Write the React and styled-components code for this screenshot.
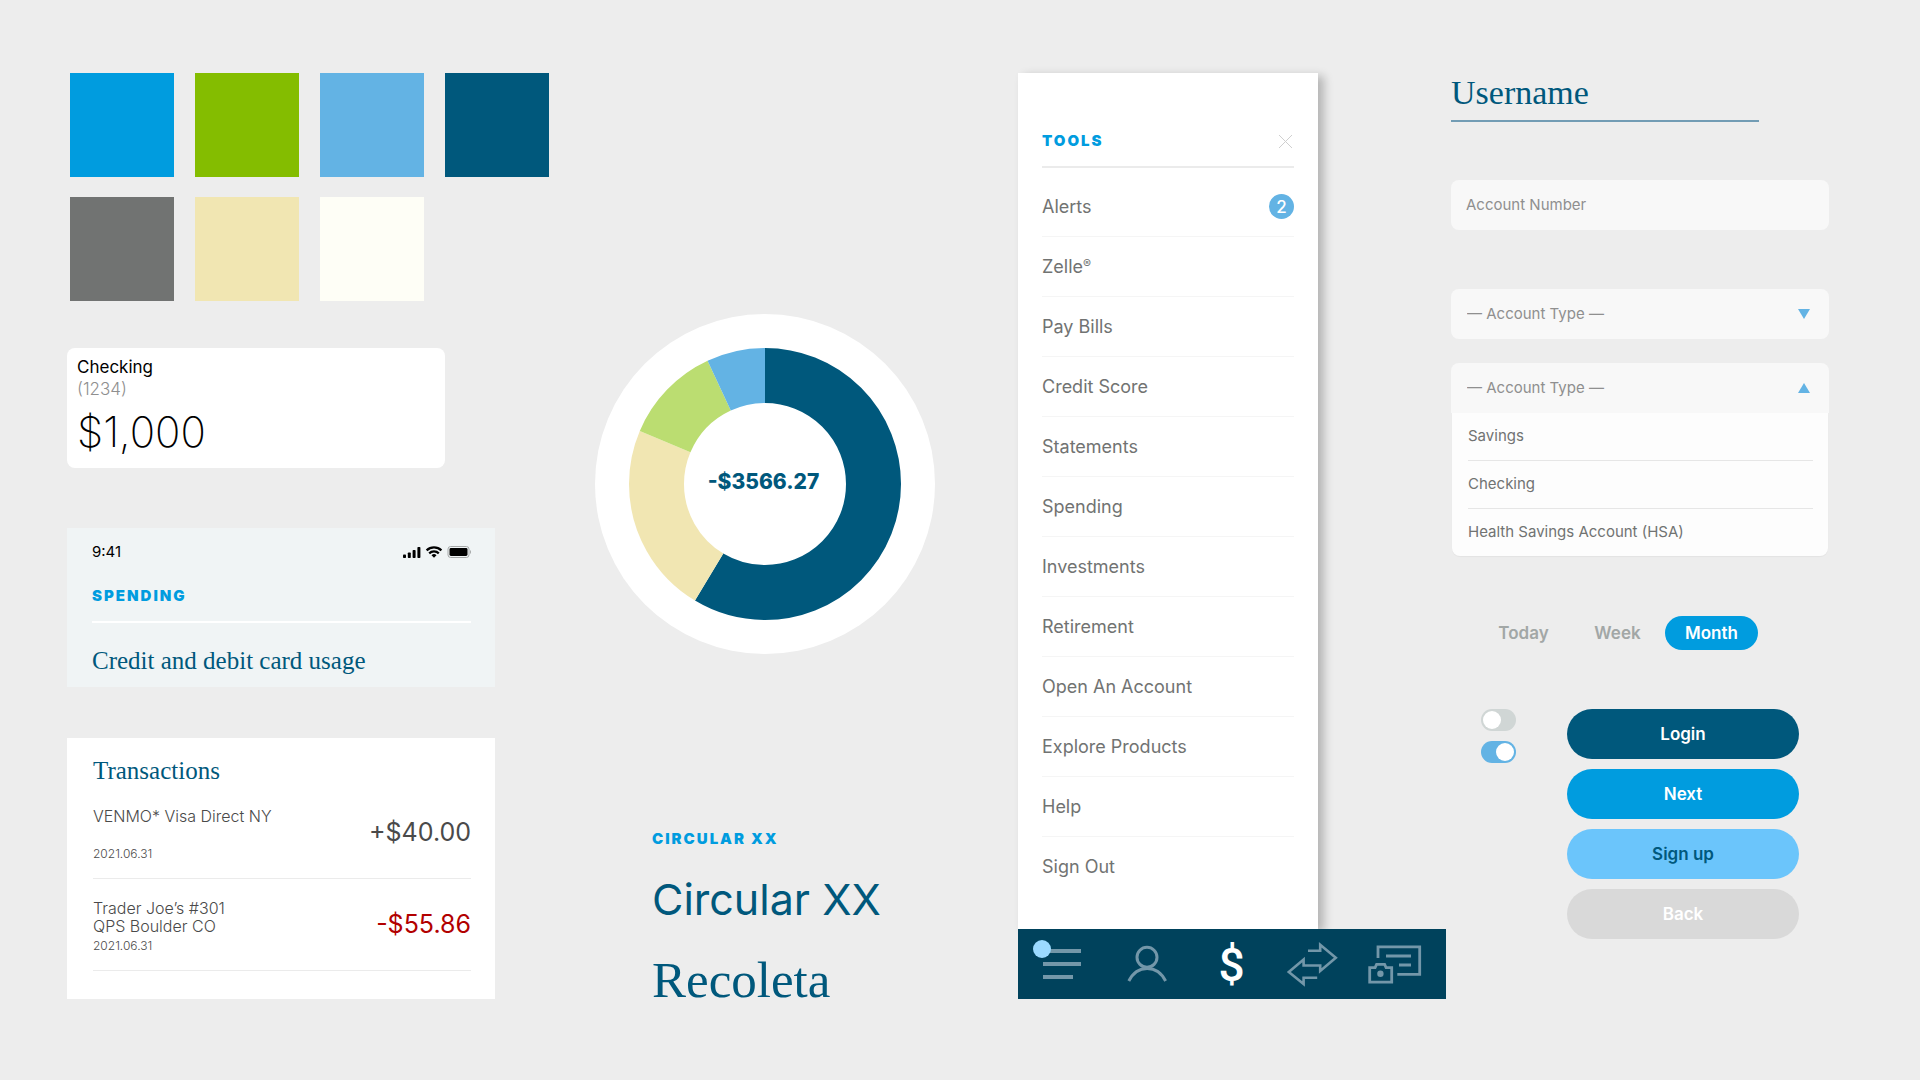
import React, { useState } from 'react';
import styled, { createGlobalStyle } from 'styled-components';

const BLUE = '#009cdf';
const GREEN = '#84bd00';
const SKY = '#63b3e4';
const NAVY = '#00587c';
const GRAY = '#717372';
const SAND = '#f1e6b2';
const IVORY = '#fefef6';
const LIME = '#bbdd71';
const NAV_BG = '#00425c';
const NAV_ICON = '#7397a9';
const PAGE_BG = '#ededed';

const SANS = "'Inter', 'Liberation Sans', sans-serif";
const SERIF = "'Liberation Serif', serif";

const SWATCHES = [BLUE, GREEN, SKY, NAVY, GRAY, SAND, IVORY];

const SLICES = [
  { name: 'dark', color: NAVY, from: 0, to: 211 },
  { name: 'sand', color: SAND, from: 211, to: 293 },
  { name: 'lime', color: LIME, from: 293, to: 335 },
  { name: 'sky', color: SKY, from: 335, to: 360 },
];

const MENU = [
  'Alerts',
  'Zelle',
  'Pay Bills',
  'Credit Score',
  'Statements',
  'Spending',
  'Investments',
  'Retirement',
  'Open An Account',
  'Explore Products',
  'Help',
  'Sign Out',
];

const ACCOUNT_TYPES = ['Savings', 'Checking', 'Health Savings Account (HSA)'];

const GlobalStyle = createGlobalStyle`
  *, *::before, *::after {
    box-sizing: border-box;
  }

  body {
    margin: 0;
    background: ${PAGE_BG};
    font-family: ${SANS};
  }

  h1, h2, h3, p, ul {
    margin: 0;
    padding: 0;
    font-weight: 400;
  }

  ul {
    list-style: none;
  }

  button, input, select {
    font-family: inherit;
    margin: 0;
    border: 0;
  }
`;

const Page = styled.main`
  display: grid;
  grid-template-columns: 528fr 423fr 433fr 378fr;
  padding: 73px 91px 81px 67px;
`;

const Column = styled.section`
  display: flex;
  flex-direction: column;
  min-width: 0;
  padding-right: ${props => props.$space || 0}px;
`;

const Swatches = styled.div`
  display: grid;
  grid-template-columns: repeat(4, 104px);
  gap: 20px 21px;
  margin: 0 0 47px 3px;
`;

const Swatch = styled.div`
  height: 104px;
  background: ${props => props.$color};
`;

const AccountCard = styled.div`
  width: 378px;
  max-width: 100%;
  padding: 8px 10px 11px;
  margin-bottom: 60px;
  border-radius: 8px;
  background: #fff;
  font-size: 17px;
  line-height: 22px;
  color: #000;
`;

const AccountDigits = styled.p`
  color: #8f8f8f;
  font-weight: 300;
`;

const Balance = styled.p`
  margin-top: 7px;
  font-size: 42px;
  line-height: 50px;
  font-weight: 200;
`;

const SpendingCard = styled.div`
  padding: 14px 24px 12px 25px;
  margin-bottom: 51px;
  background: #f0f4f5;
`;

const StatusBar = styled.div`
  display: flex;
  justify-content: space-between;
  align-items: center;
  margin-bottom: 24px;
  font-size: 15px;
  line-height: 20px;
  color: #000;
`;

const Eyebrow = styled.h2`
  color: ${BLUE};
  font-size: 15px;
  line-height: 20px;
  font-weight: 900;
  letter-spacing: 2px;
  text-transform: uppercase;
`;

const Rule = styled.hr`
  height: 2px;
  margin: 15px 0 24px;
  border: 0;
  background: #fff;
`;

const SerifTitle = styled.h3`
  color: ${NAVY};
  font-family: ${SERIF};
  font-size: 25px;
  line-height: 28px;
`;

const TransactionsCard = styled.div`
  padding: 19px 24px 28px 26px;
  background: #fff;
`;

const Transaction = styled.li`
  display: flex;
  justify-content: space-between;
  align-items: center;
  min-height: 92px;
  margin-top: ${props => (props.$first ? 2 : 0)}px;
  border-bottom: 1px solid #ebebeb;
  color: #4a4a4a;
`;

const Details = styled.div`
  padding: 20px 0 16px;
`;

const Merchant = styled.p`
  min-height: 36px;
  font-size: 16px;
  line-height: 18px;
  font-weight: 300;
  white-space: pre-line;
`;

const DateText = styled.p`
  margin-top: 3px;
  font-size: 12px;
  line-height: 16px;
  font-weight: 300;
`;

const Amount = styled.p`
  padding-bottom: 2px;
  color: ${props => (props.$negative ? '#b20000' : '#4a4a4a')};
  font-size: 25px;
  line-height: 32px;
`;

const Donut = styled.div`
  display: grid;
  place-items: center;
  width: 340px;
  height: 340px;
  margin-top: 241px;
  border-radius: 50%;
  background: #fff;

  & > * {
    grid-area: 1 / 1;
  }
`;

const DonutTotal = styled.p`
  padding: 0 3px 5px 0;
  color: ${NAVY};
  font-size: 21px;
  line-height: 28px;
  font-weight: 800;
`;

const TypeSamples = styled.div`
  margin-top: 175px;
  padding-left: 57px;
  color: ${NAVY};
  white-space: nowrap;
`;

const SansSample = styled.p`
  margin: 22px 0 23px;
  font-size: 43px;
  line-height: 56px;
`;

const SerifSample = styled.p`
  font-family: ${SERIF};
  font-size: 51px;
  line-height: 60px;
`;

const Drawer = styled.div`
  width: 300px;
  min-height: 856px;
  padding: 58px 24px 32px;
  background: #fff;
  box-shadow: 6px 3px 9px rgba(0, 0, 0, 0.24);
`;

const DrawerHeader = styled.header`
  display: flex;
  justify-content: space-between;
  align-items: center;
  padding-bottom: 15px;
  margin-bottom: 9px;
  border-bottom: 2px solid #ebebeb;
`;

const CloseButton = styled.button`
  display: flex;
  padding: 0;
  background: none;
  cursor: pointer;
`;

const MenuItem = styled.li`
  border-bottom: 1px solid #f5f5f5;

  &:last-child {
    border-color: transparent;
  }
`;

const MenuLink = styled.a`
  display: flex;
  justify-content: space-between;
  align-items: center;
  height: 59px;
  color: ${GRAY};
  font-size: 18px;
  font-weight: 400;
  text-decoration: none;
`;

const Mark = styled.sup`
  font-size: 12px;
  line-height: 1;
  vertical-align: 5px;
`;

const Badge = styled.span`
  display: grid;
  place-items: center;
  width: 25px;
  height: 25px;
  border-radius: 50%;
  background: ${SKY};
  color: #fff;
  font-size: 17px;
  font-weight: 500;
`;

/* positioned so that it covers the drawer's shadow */
const TabBar = styled.nav`
  position: relative;
  display: grid;
  grid-template-columns: 84fr 90fr 79fr 82fr 93fr;
  height: 70px;
  background: ${NAV_BG};
`;

const TabButton = styled.button`
  display: flex;
  justify-content: center;
  align-items: center;
  padding: 0;
  background: none;
  color: #fff;
  cursor: pointer;

  & > svg {
    fill: none;
    stroke: ${NAV_ICON};
    stroke-width: 3;
  }
`;

const Dollar = styled.span`
  padding-top: 2px;
  font-family: Roboto, sans-serif;
  font-size: 46px;
  font-weight: 500;
  line-height: 48px;
`;

const UsernameInput = styled.input`
  width: 308px;
  max-width: 100%;
  height: 49px;
  padding: 0 0 8px;
  margin-bottom: 58px;
  border-bottom: 2px solid #729cb4;
  border-radius: 0;
  background: none;
  color: ${NAVY};
  font-family: ${SERIF};
  font-size: 34px;
  outline: none;

  &::placeholder {
    color: ${NAVY};
    opacity: 1;
  }
`;

const AccountInput = styled.input`
  width: 100%;
  height: 50px;
  padding: 0 15px 2px;
  margin-bottom: 59px;
  border-radius: 8px;
  background: #f8f8f8;
  color: ${GRAY};
  font-size: 15px;
  outline: none;

  &::placeholder {
    color: #8f8f8f;
    opacity: 1;
  }
`;

const SelectBox = styled.div`
  display: grid;
  align-items: center;
  margin-bottom: ${props => (props.$open ? 0 : 24)}px;

  & > * {
    grid-area: 1 / 1;
  }

  & > svg {
    justify-self: end;
    margin-right: 19px;
    fill: ${SKY};
    pointer-events: none;
  }
`;

const Select = styled.select`
  appearance: none;
  width: 100%;
  height: 50px;
  padding: 0 40px 2px 16px;
  border-radius: ${props => (props.$open ? '8px 8px 0 0' : '8px')};
  background: #f8f8f8;
  color: #8f8f8f;
  font-size: 15px;
  outline: none;
`;

const OptionList = styled.ul`
  margin: 0 1px 60px;
  padding: 0 15px 0 16px;
  border-radius: 0 0 8px 8px;
  background: #fdfdfd;
  box-shadow: 0 1px 1px rgba(0, 0, 0, 0.04);
`;

const Option = styled.li`
  height: 48px;
  border-bottom: 1px solid #e6e6e6;
  color: ${GRAY};
  font-size: 15px;
  line-height: 46px;

  &:last-child {
    height: 47px;
    border-bottom: 0;
  }
`;

const Ranges = styled.div`
  display: grid;
  grid-template-columns: repeat(3, 93px);
  gap: 1px;
  margin: 0 0 59px 26px;
`;

const RangeButton = styled.button`
  height: 34px;
  padding: 0;
  border-radius: 17px;
  background: ${props => (props.$active ? BLUE : 'none')};
  color: ${props => (props.$active ? '#fff' : '#a2a7a6')};
  font-size: 17px;
  font-weight: 600;
  cursor: pointer;
`;

const Actions = styled.div`
  display: flex;
  align-items: flex-start;
  gap: 51px;
  padding: 0 30px;
`;

const Toggles = styled.div`
  display: grid;
  gap: 10px;
`;

const Toggle = styled.input`
  appearance: none;
  display: flex;
  width: 35px;
  height: 22px;
  padding: 2px;
  border-radius: 11px;
  background: #d0d6d5;
  cursor: pointer;

  &::before {
    content: '';
    width: 18px;
    height: 18px;
    border-radius: 50%;
    background: #fff;
  }

  &:checked {
    justify-content: flex-end;
    background: ${SKY};
  }
`;

const Buttons = styled.div`
  display: grid;
  flex: 1 1 auto;
  gap: 10px;
`;

const Button = styled.button`
  height: 50px;
  border-radius: 25px;
  background: ${props => props.$bg};
  color: ${props => props.$color || '#fff'};
  font-size: 17px;
  font-weight: 600;
  cursor: pointer;
`;

const StatusIcons = () => (
  <svg width="68" height="12" viewBox="0 0 68 12" aria-hidden="true">
    <rect x="0" y="8.5" width="3" height="3.5" rx="0.8" />
    <rect x="4.8" y="6.5" width="3" height="5.5" rx="0.8" />
    <rect x="9.6" y="4" width="3" height="8" rx="0.8" />
    <rect x="14.4" y="1" width="3" height="11" rx="0.8" />
    <g fill="none" stroke="#000" strokeWidth="2.2">
      <path d="M23.6 4.4a10.6 10.6 0 0 1 14.8 0" />
      <path d="M26.2 7.4a6.8 6.8 0 0 1 9.6 0" />
    </g>
    <path d="M31 11.8l-2.5-2.5a3.6 3.6 0 0 1 5 0z" />
    <rect
      x="45"
      y="0.5"
      width="21"
      height="11"
      rx="2.6"
      fill="none"
      stroke="#a5a8a8"
    />
    <rect x="46.5" y="2" width="18" height="8" rx="1.4" />
    <path d="M67 4v4q1-.6 1-2t-1-2z" fill="#a5a8a8" />
  </svg>
);

const DonutChart = () => (
  <svg width="272" height="272" viewBox="-136 -136 272 272" aria-hidden="true">
    <g fill="none" strokeWidth="55" transform="rotate(-90)">
      {SLICES.map(({ name, color, from, to }) => (
        <circle
          key={name}
          r="108.5"
          stroke={color}
          pathLength="360"
          strokeDasharray={`${to - from} ${360 - to + from}`}
          strokeDashoffset={-from}
        />
      ))}
    </g>
  </svg>
);

const Arrow = ({ up }) => (
  <svg width="12" height="10" viewBox="0 0 12 10" aria-hidden="true">
    <path d={up ? 'M6 0l6 10H0z' : 'M0 0h12L6 10z'} />
  </svg>
);

const AccountSelect = ({ label, open }) => (
  <SelectBox $open={open}>
    <Select aria-label={label} $open={open} defaultValue="">
      <option value="">— Account Type —</option>
      {ACCOUNT_TYPES.map(type => (
        <option key={type} value={type}>
          {type}
        </option>
      ))}
    </Select>
    <Arrow up={open} />
  </SelectBox>
);

const App = () => {
  const [range, setRange] = useState('Month');

  return (
    <>
      <GlobalStyle />
      <Page>
        <Column $space={100}>
          <Swatches>
            {SWATCHES.map(color => (
              <Swatch key={color} $color={color} />
            ))}
          </Swatches>
          <AccountCard>
            <p>Checking</p>
            <AccountDigits>(1234)</AccountDigits>
            <Balance>$1,000</Balance>
          </AccountCard>
          <SpendingCard>
            <StatusBar>
              <span>9:41</span>
              <StatusIcons />
            </StatusBar>
            <Eyebrow>Spending</Eyebrow>
            <Rule />
            <SerifTitle>Credit and debit card usage</SerifTitle>
          </SpendingCard>
          <TransactionsCard>
            <SerifTitle>Transactions</SerifTitle>
            <ul>
              <Transaction $first>
                <Details>
                  <Merchant>VENMO* Visa Direct NY</Merchant>
                  <DateText>2021.06.31</DateText>
                </Details>
                <Amount>+$40.00</Amount>
              </Transaction>
              <Transaction>
                <Details>
                  <Merchant>{'Trader Joe’s #301\nQPS Boulder CO'}</Merchant>
                  <DateText>2021.06.31</DateText>
                </Details>
                <Amount $negative>-$55.86</Amount>
              </Transaction>
            </ul>
          </TransactionsCard>
        </Column>

        <Column $space={83}>
          <Donut>
            <DonutChart />
            <DonutTotal>-$3566.27</DonutTotal>
          </Donut>
          <TypeSamples>
            <Eyebrow>Circular XX</Eyebrow>
            <SansSample>Circular XX</SansSample>
            <SerifSample>Recoleta</SerifSample>
          </TypeSamples>
        </Column>

        <Column $space={5}>
          <Drawer>
            <DrawerHeader>
              <Eyebrow>Tools</Eyebrow>
              <CloseButton aria-label="Close">
                <svg width="16" height="15" viewBox="0 0 16 15">
                  <path d="M1 1l13 13M14 1L1 14" stroke="#cfcfcf" />
                </svg>
              </CloseButton>
            </DrawerHeader>
            <ul>
              {MENU.map(item => (
                <MenuItem key={item}>
                  <MenuLink href="#">
                    <span>
                      {item}
                      {item === 'Zelle' && <Mark>®</Mark>}
                    </span>
                    {item === 'Alerts' && <Badge>2</Badge>}
                  </MenuLink>
                </MenuItem>
              ))}
            </ul>
          </Drawer>
          <TabBar>
            <TabButton aria-label="Menu">
              <svg width="54" height="70" viewBox="15 0 54 70">
                <path d="M25 22h38M25 35h38M25 48h30" strokeWidth="4" />
                <circle cx="24" cy="20" r="9" fill="#9bdaff" stroke="none" />
              </svg>
            </TabButton>
            <TabButton aria-label="Profile">
              <svg width="42" height="70" viewBox="108 0 42 70">
                <circle cx="129" cy="28.3" r="10" />
                <path d="M110.8 52c4-8 10.5-12.6 18.4-12.6S143.6 44 147.6 52" />
              </svg>
            </TabButton>
            <TabButton aria-label="Spending">
              <Dollar>$</Dollar>
            </TabButton>
            <TabButton aria-label="Transfers">
              <svg width="54" height="70" viewBox="267 0 54 70">
                <path
                  d="M290 21.7h12.2v-6l15.6 13.1-15.6 13.1v-5.4h-16.6v-6L270.8 43l14.8 12v-6.3h13.6"
                  strokeWidth="2.6"
                />
              </svg>
            </TabButton>
            <TabButton aria-label="Deposit">
              <svg width="68" height="70" viewBox="348 0 68 70">
                <path
                  d="M360 29V17.8h41.7v27.5h-22.4M368 27h25M381 36h12"
                  strokeWidth="2.8"
                />
                <path
                  d="M351.7 38.6h5.4l1.5-3.3h8l1.5 3.3h5.6v14.5h-22z"
                  strokeWidth="2.8"
                />
                <circle cx="362.4" cy="44.8" r="3.2" fill={NAV_ICON} stroke="none" />
              </svg>
            </TabButton>
          </TabBar>
        </Column>

        <Column>
          <UsernameInput aria-label="Username" placeholder="Username" />
          <AccountInput aria-label="Account Number" placeholder="Account Number" />
          <AccountSelect label="Account type" />
          <AccountSelect label="Account type, expanded" open />
          <OptionList>
            {ACCOUNT_TYPES.map(type => (
              <Option key={type}>{type}</Option>
            ))}
          </OptionList>
          <Ranges>
            {['Today', 'Week', 'Month'].map(name => (
              <RangeButton
                key={name}
                $active={name === range}
                onClick={() => setRange(name)}
              >
                {name}
              </RangeButton>
            ))}
          </Ranges>
          <Actions>
            <Toggles>
              <Toggle type="checkbox" aria-label="Off switch" />
              <Toggle type="checkbox" aria-label="On switch" defaultChecked />
            </Toggles>
            <Buttons>
              <Button $bg={NAVY}>Login</Button>
              <Button $bg={BLUE}>Next</Button>
              <Button $bg="#6bc5fb" $color={NAVY}>
                Sign up
              </Button>
              <Button $bg="#d9d9d9">Back</Button>
            </Buttons>
          </Actions>
        </Column>
      </Page>
    </>
  );
};

export default App;
